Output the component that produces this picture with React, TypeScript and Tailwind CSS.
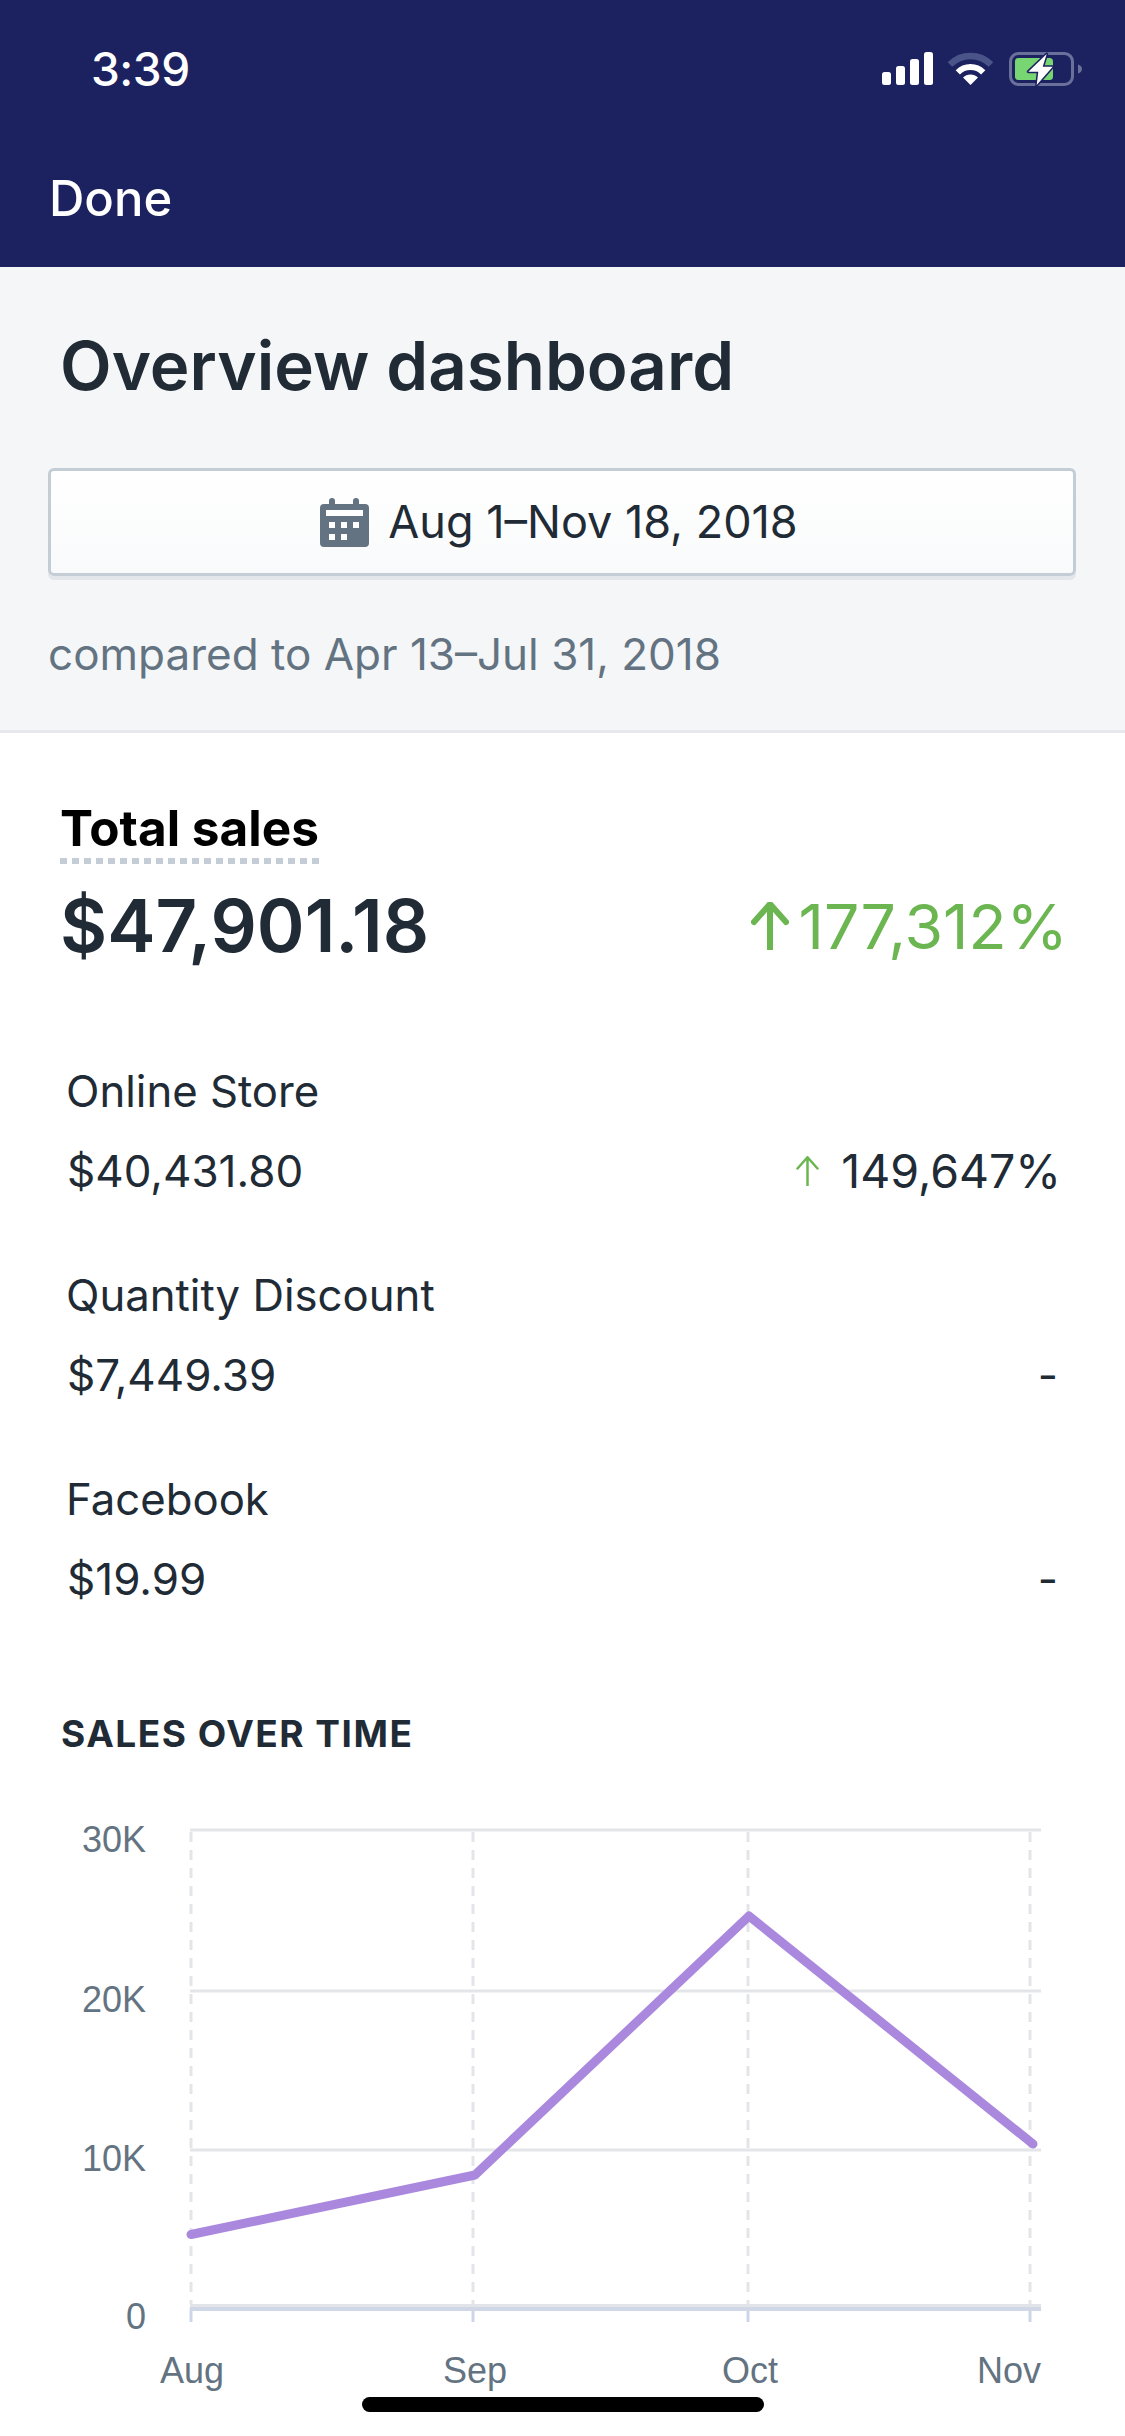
import React from 'react';

type ChannelRow = {
  name: string;
  amount: string;
  change?: string;
};

const channels: ChannelRow[] = [
  { name: 'Online Store', amount: '$40,431.80', change: '149,647%' },
  { name: 'Quantity Discount', amount: '$7,449.39' },
  { name: 'Facebook', amount: '$19.99' },
];

function StatusIcons() {
  return (
    <svg width="200" height="34" viewBox="0 0 200 34" fill="none">
      <rect x="0" y="20" width="9" height="13" rx="2.5" fill="#fff" />
      <rect x="14" y="14" width="9" height="19" rx="2.5" fill="#fff" />
      <rect x="28" y="7" width="9" height="26" rx="2.5" fill="#fff" />
      <rect x="42" y="0" width="9" height="33" rx="2.5" fill="#fff" />
      <path d="M68 12.5A29 29 0 0 1 109 12.5" stroke="#4a5488" strokeWidth="6.5" />
      <path d="M75.8 20.3A18 18 0 0 1 101.2 20.3" stroke="#fff" strokeWidth="6" />
      <path d="M88.5 33L81 25.5A10.6 10.6 0 0 1 96 25.5Z" fill="#fff" />
      <rect x="128.5" y="1.5" width="62" height="31" rx="8" stroke="#6a7099" strokeWidth="3" />
      <path d="M196 12.5c2.6.8 4 2.4 4 4.5s-1.4 3.700-4 4.500z" fill="#6a7099" />
      <rect x="133" y="6" width="38" height="22" rx="3.500" fill="#77d672" />
      <path
        d="M164.700 2L146.300 19.700H156.300L154.700 33L170.700 14.700H160.700Z"
        fill="#fff"
        stroke="#1c2260"
        strokeWidth="3"
        paintOrder="stroke"
        strokeLinejoin="round"
      />
    </svg>
  );
}

function CalendarIcon() {
  return (
    <svg width="49" height="49" viewBox="0 0 49 49" className="shrink-0">
      <path
        d="M12 0a3 3 0 0 1 3 3v3h18V3a3 3 0 0 1 6 0v3h6a4 4 0 0 1 4 4v35a4 4 0 0 1-4 4H4a4 4 0 0 1-4-4V10a4 4 0 0 1 4-4h5V3a3 3 0 0 1 3-3z"
        fill="#637381"
      />
      <rect x="6" y="12" width="37" height="6" fill="#fff" />
      <rect x="9" y="24" width="6" height="6" fill="#fff" />
      <rect x="21" y="24" width="6" height="6" fill="#fff" />
      <rect x="33" y="24" width="6" height="6" fill="#fff" />
      <rect x="9" y="36" width="6" height="6" fill="#fff" />
      <rect x="21" y="36" width="6" height="6" fill="#fff" />
    </svg>
  );
}

function UpArrow({ className, stroke }: { className: string; stroke: number }) {
  return (
    <svg viewBox="0 0 36 48" className={className} fill="none">
      <path
        d="M18 47V2M2 20L18 2L34 20"
        stroke="#6cb651"
        strokeWidth={stroke}
        strokeLinecap="round"
        strokeLinejoin="round"
      />
    </svg>
  );
}

// offsets below are in chart space: x - 40, y - 1800
function SalesChart() {
  const gridYs = [29, 190, 349];
  const tickXs = [151, 433, 708, 990];
  const labelFont = "'Liberation Sans', sans-serif";
  return (
    <svg width="1045" height="600" viewBox="0 0 1045 600" className="mt-[45px] ml-[40px] block">
      {gridYs.map((y) => (
        <line key={y} x1="150" x2="1001" y1={y} y2={y} stroke="#e4e5e8" strokeWidth="3" />
      ))}
      {tickXs.map((x) => (
        <React.Fragment key={x}>
          <line x1={x} x2={x} y1="31" y2="503" stroke="#e4e5e8" strokeWidth="3" strokeDasharray="10 8" />
          <line x1={x} x2={x} y1="507" y2="521" stroke="#cdd6e8" strokeWidth="3" />
        </React.Fragment>
      ))}
      <rect x="150" y="503" width="851" height="3" fill="#e1e4e8" />
      <rect x="150" y="506" width="851" height="4" fill="#d0d8e8" />
      <polyline
        points="151,433.500 435,374 709,115 993,343"
        fill="none"
        stroke="#aa88dd"
        strokeWidth="9"
        strokeLinecap="round"
        strokeLinejoin="round"
      />
      <g fill="#637381" fontSize="36" fontFamily={labelFont} textAnchor="end">
        <text x="106" y="51">30K</text>
        <text x="106" y="211">20K</text>
        <text x="106" y="370">10K</text>
        <text x="106" y="528">0</text>
      </g>
      <g fill="#637381" fontSize="36" fontFamily={labelFont}>
        <text x="120" y="582">Aug</text>
        <text x="403" y="582">Sep</text>
        <text x="682" y="582">Oct</text>
        <text x="937" y="582">Nov</text>
      </g>
    </svg>
  );
}

export default function App() {
  return (
    <div className="relative h-[2436px] w-[1125px] overflow-hidden bg-white font-['Inter',sans-serif] text-[#212b36]">
      {/* nav */}
      <div className="h-[267px] bg-[#1c2260] text-white">
        <div className="flex items-start justify-between pt-[52px] pl-[91px] pr-[43px]">
          <span className="text-[46px] leading-[34px] font-medium tracking-[-0.5px]">3:39</span>
          <StatusIcons />
        </div>
        <div className="pt-[83px] pl-[49px] text-[49px] leading-[60px] font-medium">Done</div>
      </div>

      {/* date range */}
      <div className="h-[466px] border-b-[3px] border-[#e6e8eb] bg-[#f4f6f8] px-[48px]">
        <h1 className="pt-[55px] pl-[12px] text-[67.200px] leading-[88px] font-semibold">Overview dashboard</h1>
        <button className="mt-[58px] flex h-[108px] w-[1028px] items-center justify-center gap-[19px] rounded-[6px] border-[3px] border-[#c4cdd5] bg-gradient-to-b from-white to-[#f9fafb] pr-[6px] shadow-[0_4px_0_#e3e6ea]">
          <CalendarIcon />
          <span className="text-[45px]">Aug 1–Nov 18, 2018</span>
        </button>
        <p className="mt-[50px] text-[44px] leading-[56px] text-[#637381]">compared to Apr 13–Jul 31, 2018</p>
      </div>

      {/* totals */}
      <div className="pr-[57px] pl-[60px]">
        <div className="w-fit pt-[72px]">
          <div className="text-[49.500px] leading-[46px] font-bold text-black">Total sales</div>
          <div className="mt-[7px] h-[6px] bg-[repeating-linear-gradient(90deg,#c4cdd5_0_7px,transparent_7px_12px)]" />
        </div>
        <div className="mt-[20px] flex items-center justify-between">
          <span className="text-[72.500px] leading-[84px] font-semibold">$47,901.18</span>
          <span className="flex items-center gap-[10px] text-[62.500px] leading-[84px] text-[#6cb651]">
            <UpArrow className="h-[48px] w-[38px]" stroke={6} />
            177,312%
          </span>
        </div>
      </div>

      {/* channels */}
      <div className="flex flex-col gap-[46px] pt-[84px] pr-[64px] pl-[66px]">
        {channels.map((row) => (
          <div key={row.name}>
            <div className="text-[43.700px] leading-[80px]">{row.name}</div>
            <div className="flex items-center justify-between text-[44px] leading-[78px]">
              <span className="pl-[1px]">{row.amount}</span>
              {row.change ? (
                <span className="flex items-center gap-[22px] text-[46.500px]">
                  <UpArrow className="h-[30px] w-[23px]" stroke={4} />
                  {row.change}
                </span>
              ) : (
                <span className="pr-[3px]">-</span>
              )}
            </div>
          </div>
        ))}
      </div>

      {/* chart */}
      <h2 className="mt-[94px] pl-[61px] text-[37px] leading-[44px] font-bold tracking-[1.500px]">SALES OVER TIME</h2>
      <SalesChart />

      <div className="absolute bottom-[24px] left-[362px] h-[15px] w-[402px] rounded-full bg-black" />
    </div>
  );
}
